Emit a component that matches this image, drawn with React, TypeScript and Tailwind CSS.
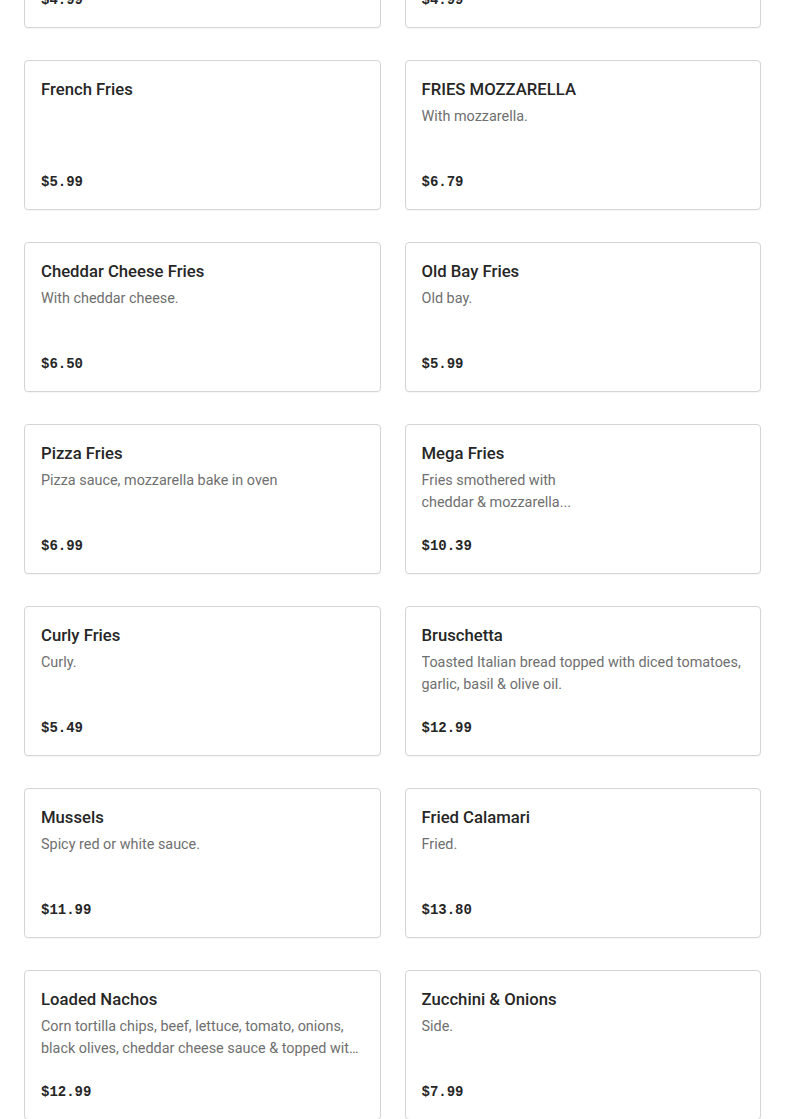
import React from "react";

type Item = { name: string; desc?: React.ReactNode; price: string };

const rows: Item[][] = [
  [
    { name: "Garlic Bread", desc: "", price: "$4.99" },
    { name: "Onion Rings", desc: "", price: "$4.99" },
  ],
  [
    { name: "French Fries", price: "$5.99" },
    { name: "FRIES MOZZARELLA", desc: "With mozzarella.", price: "$6.79" },
  ],
  [
    { name: "Cheddar Cheese Fries", desc: "With cheddar cheese.", price: "$6.50" },
    { name: "Old Bay Fries", desc: "Old bay.", price: "$5.99" },
  ],
  [
    { name: "Pizza Fries", desc: "Pizza sauce, mozzarella bake in oven", price: "$6.99" },
    {
      name: "Mega Fries",
      desc: (
        <>
          Fries smothered with
          <br />
          cheddar &amp; mozzarella...
        </>
      ),
      price: "$10.39",
    },
  ],
  [
    { name: "Curly Fries", desc: "Curly.", price: "$5.49" },
    {
      name: "Bruschetta",
      desc: "Toasted Italian bread topped with diced tomatoes, garlic, basil & olive oil.",
      price: "$12.99",
    },
  ],
  [
    { name: "Mussels", desc: "Spicy red or white sauce.", price: "$11.99" },
    { name: "Fried Calamari", desc: "Fried.", price: "$13.80" },
  ],
  [
    {
      name: "Loaded Nachos",
      desc: "Corn tortilla chips, beef, lettuce, tomato, onions, black olives, cheddar cheese sauce & topped with jalapeños and sour cream.",
      price: "$12.99",
    },
    { name: "Zucchini & Onions", desc: "Side.", price: "$7.99" },
  ],
];

const Card = ({ item }: { item: Item }) => (
  <div className="flex h-[150px] flex-col rounded border border-[#d5d5d5] bg-white px-4 pt-[17px] pb-[17px] shadow-[0_1px_1px_rgba(0,0,0,0.04)]">
    <h3 className="text-[16.7px] leading-6 font-medium text-[#262626]">{item.name}</h3>
    {item.desc ? (
      <p className="mt-1 line-clamp-2 text-[14.4px] leading-[22px] text-[#6f6f6f]">{item.desc}</p>
    ) : null}
    <div className="mt-auto font-['Liberation_Mono',monospace] text-[14px] leading-5 font-bold text-[#262626]">
      {item.price}
    </div>
  </div>
);

export default function App() {
  return (
    <div className="h-[1119px] overflow-hidden bg-white font-['Roboto',sans-serif]">
      <div className="-mt-[122px] flex flex-col gap-8 px-6">
        {rows.map((row, i) => (
          <div key={i} className="grid grid-cols-2 gap-6">
            {row.map((item) => (
              <Card key={item.name} item={item} />
            ))}
          </div>
        ))}
      </div>
    </div>
  );
}
